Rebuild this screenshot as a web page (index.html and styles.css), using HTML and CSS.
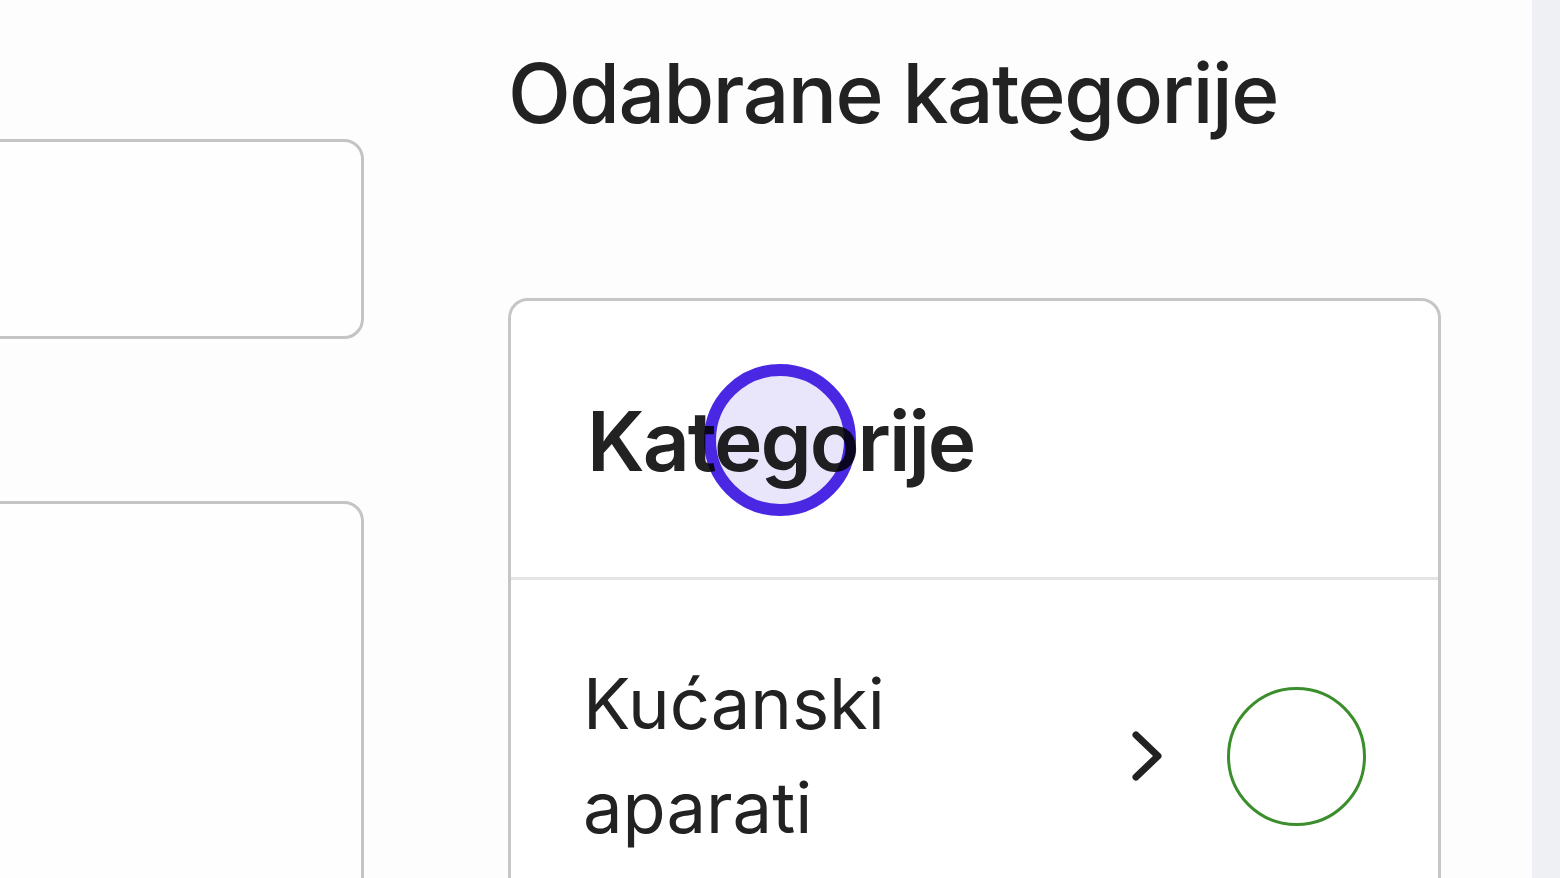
FILE: index.html
```html
<!DOCTYPE html>
<html lang="hr">
<head>
<meta charset="utf-8">
<link rel="stylesheet" href="styles.css">
</head>
<body>
<div class="page">
  <div class="left-col">
    <div class="box box-top"></div>
    <div class="box box-bottom"></div>
  </div>
  <div class="main-col">
    <h1 class="title">Odabrane kategorije</h1>
    <div class="card">
      <div class="card-head">
        <h2 class="card-title">Kategorije</h2>
        <span class="pointer"></span>
      </div>
      <div class="row">
        <span class="row-label">Kućanski aparati</span>
        <svg class="chevron" viewBox="0 0 32 50" width="32" height="50"><path d="M5 4 L27 25 L5 46" fill="none" stroke="#222" stroke-width="7" stroke-linecap="round" stroke-linejoin="round"/></svg>
        <span class="radio"></span>
      </div>
    </div>
  </div>
  <div class="scroll-strip"></div>
</div>
</body>
</html>
```
FILE: styles.css
```css
html, body {
  margin: 0;
  padding: 0;
  height: 100%;
  overflow: hidden;
  background: #fdfdfd;
}
body {
  font-family: Inter, "Noto Sans", sans-serif;
  color: #222;
}
.page {
  display: flex;
  height: 878px;
  overflow: hidden;
}
.left-col {
  width: 364px;
  flex: none;
  overflow: hidden;
  display: flex;
  flex-direction: column;
  padding-top: 139px;
  gap: 162px;
}
.box {
  flex: none;
  margin-left: -60px;
  width: 424px;
  border: 3px solid #c4c4c4;
  border-radius: 20px;
  background: #fefefe;
  box-sizing: border-box;
}
.box-top { height: 200px; }
.box-bottom { height: 500px; }
.main-col {
  flex: 1;
  padding-left: 144px;
  padding-right: 91px;
}
.title {
  margin: 0;
  padding-top: 44px;
  font-size: 82px;
  font-weight: 500;
  line-height: 100px;
  letter-spacing: -1.5px;
}
.card {
  margin-top: 154px;
  border: 3px solid #c6c6c6;
  border-radius: 20px;
  background: #fff;
  height: 700px;
  box-sizing: border-box;
}
.card-head {
  position: relative;
  height: 279px;
  border-bottom: 3px solid #e4e4e4;
  box-sizing: border-box;
  display: flex;
  align-items: center;
  padding-left: 76px;
}
.card-title {
  margin: 0;
  font-size: 82px;
  font-weight: 600;
  letter-spacing: -2px;
  line-height: 1;
  padding-top: 6px;
}
.pointer {
  position: absolute;
  left: 193px;
  top: 63px;
  width: 152px;
  height: 152px;
  box-sizing: border-box;
  border: 12px solid #4a27e2;
  border-radius: 50%;
  background: #e9e6fb;
  mix-blend-mode: multiply;
}
.row {
  display: flex;
  align-items: center;
  padding: 72px 72px 0 72px;
}
.row-label {
  width: 360px;
  font-size: 70.5px;
  line-height: 104px;
  font-weight: 400;
}
.chevron {
  margin-left: 188px;
  flex: none;
}
.radio {
  margin-left: 64px;
  width: 139px;
  height: 139px;
  box-sizing: border-box;
  border: 3px solid #3b8e2c;
  border-radius: 50%;
  flex: none;
}
.scroll-strip {
  width: 28px;
  flex: none;
  background: #eff0f3;
}
```
